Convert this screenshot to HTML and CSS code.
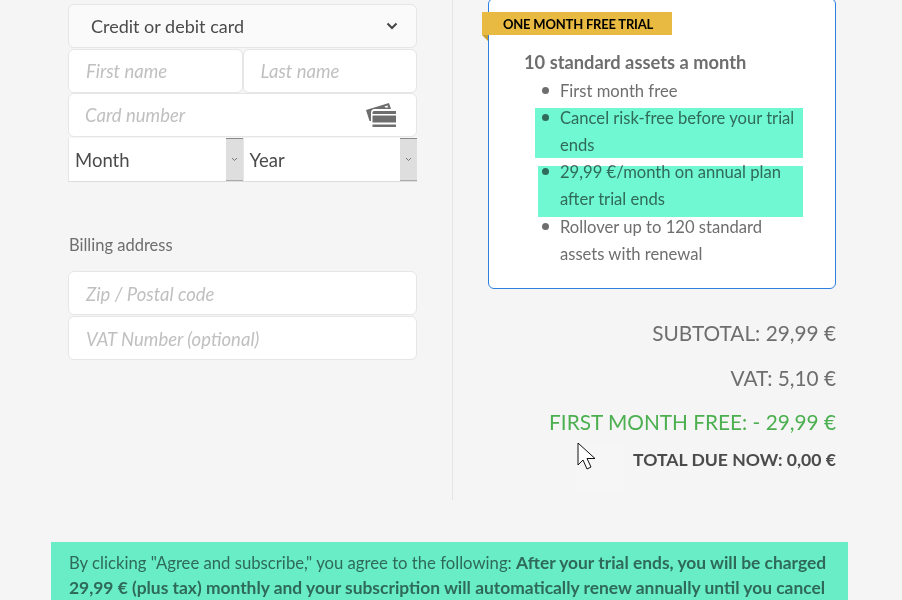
FILE: index.html
```html
<!DOCTYPE html>
<html lang="en">
<head>
    <meta charset="UTF-8">
    <title>Checkout</title>
    <link rel="stylesheet" href="styles.css">
</head>
<body>
    <div class="checkout">
        <div class="form-col">
            <div class="field pay-type">
                <span>Credit or debit card</span>
                <svg class="chevron" width="12" height="8" viewBox="0 0 12 8"><path d="M1.500 1.500 6 6l4.500-4.500" fill="none" stroke="#444" stroke-width="2"/></svg>
            </div>
            <div class="row">
                <div class="field half ph first-name">First name</div>
                <div class="field half ph last-name">Last name</div>
            </div>
            <div class="field ph card-no">
                <span>Card number</span>
                <svg class="card-icon" width="32" height="26" viewBox="0 0 32 26">
                    <path d="M1 8 24 1l2 6H9.500C7.500 7 6 8.500 6 10.500V19H4.500z" fill="#6e6e6e"/>
                    <path d="M19.500 4.500l3-.9.6 1.800h-3z" fill="#fff"/>
                    <path d="M7.500 10.500C7.500 9.500 8.500 9 9.500 9H31v3H7.500zM7.500 13.500H31V20.500H7.500zM7.500 22.500H31V25H7.500z" fill="#6e6e6e"/>
                </svg>
            </div>
            <div class="row">
                <div class="select month"><span class="sel-label">Month</span><span class="arrow"><svg width="7" height="5" viewBox="0 0 7 5"><path d="M1 1l2.500 2.500L6 1" fill="none" stroke="#777" stroke-width="1"/></svg></span></div>
                <div class="select year"><span class="sel-label">Year</span><span class="arrow"><svg width="7" height="5" viewBox="0 0 7 5"><path d="M1 1l2.500 2.500L6 1" fill="none" stroke="#777" stroke-width="1"/></svg></span></div>
            </div>
            <h4 class="billing">Billing address</h4>
            <div class="field ph zip">Zip / Postal code</div>
            <div class="field ph vat">VAT Number (optional)</div>
        </div>

        <div class="summary-col">
            <div class="plan">
                <div class="ribbon">ONE MONTH FREE TRIAL</div>
                <h3>10 standard assets a month</h3>
                <ul>
                    <li>First month free</li>
                    <li>Cancel risk-free before your trial ends</li>
                    <li>29,99 €/month on annual plan after trial ends</li>
                    <li>Rollover up to 120 standard assets with renewal</li>
                </ul>
                <div class="mark mark-one"></div>
                <div class="mark mark-two"></div>
            </div>
            <div class="totals">
                <p>SUBTOTAL: 29,99 €</p>
                <p>VAT: 5,10 €</p>
                <p class="free">FIRST MONTH FREE: - 29,99 €</p>
                <p class="due">TOTAL DUE NOW: 0,00 €</p>
            </div>
        </div>
    </div>

    <div class="terms">
        By clicking "Agree and subscribe," you agree to the following: <strong>After your trial ends, you will be charged 29,99 € (plus tax) monthly and your subscription will automatically renew annually until you cancel</strong>
    </div>

    <div class="cursor-box"></div>
    <svg class="cursor" width="20" height="29" viewBox="0 0 20 29"><path d="M1 1v22l5-5 4 9 4-2-4-8.500h8z" fill="#fff" stroke="#111" stroke-width="1"/></svg>
</body>
</html>
```

FILE: styles.css
```css
html, body { margin: 0; padding: 0; height: 600px; overflow: hidden; }
body { font-family: "Lato", "Noto Sans", sans-serif; background-color: #f5f5f5; color: #4b4b4b; position: relative; }

.checkout { display: flex; height: 500px; padding-left: 68px; }
.form-col { width: 349px; padding-top: 4px; padding-right: 35px; border-right: 1px solid #e4e4e4; }
.summary-col { width: 348px; margin-left: 35px; margin-top: -2px; }

.row { display: flex; }
.field { box-sizing: border-box; height: 44px; margin-bottom: 0.500px; background-color: #fff; border: 1px solid #e6e6e6; border-radius: 6px; font-size: 18.500px; display: flex; align-items: center; justify-content: space-between; }
.half { width: 50%; }
.ph { color: #c0c0c0; font-style: italic; }
.pay-type { background-color: #fafafa; padding: 0 18px 0 22px; color: #4b4b4b; font-size: 18px; }
.first-name, .last-name { padding-left: 17px; }
.card-no { padding: 0 19px 0 16px; }
.zip, .vat { padding: 2px 0 0 17px; margin-bottom: 1px; }

.select { box-sizing: border-box; width: 50%; height: 44px; display: flex; align-items: center; justify-content: space-between; padding-left: 6px; background-color: #fff; border-bottom: 1px solid #ddd; border-left: 1px solid #e6e6e6; font-size: 18.500px; }
.sel-label { padding-top: 2px; }
.arrow { width: 17px; height: 100%; box-sizing: border-box; background-color: #dedede; border-top: 1px solid #8a8a8a; border-bottom: 1px solid #aaa; display: flex; align-items: center; justify-content: center; }

.billing { font-size: 16.500px; font-weight: 400; color: #6e6e6e; margin: 53px 0 16px 1px; line-height: 20px; }

.plan { position: relative; box-sizing: border-box; height: 291px; background-color: #fff; border: 1px solid #2d80e0; border-radius: 6px; padding: 51px 32px 0 35px; }
.plan h3 { font-size: 18.300px; font-weight: 700; color: #6e6e6e; margin: 0; line-height: 24px; }
.plan ul { margin: 3.500px 0 0; padding: 0 0 0 36px; color: #6e6e6e; font-size: 16.600px; line-height: 27.200px; list-style: none; }
.plan li { position: relative; }
.plan li::before { content: ""; position: absolute; left: -18px; top: 9px; width: 7px; height: 7px; border-radius: 50%; background-color: #6e6e6e; }
.ribbon { position: absolute; left: -7px; top: 13px; width: 169px; height: 23px; padding-left: 21px; background-color: #e9ba41; color: #000; font-size: 13px; font-weight: 700; letter-spacing: -0.200px; line-height: 24px; }
.ribbon::after { content: ""; position: absolute; left: 0; top: 23px; border-top: 6px solid #c99f35; border-left: 6px solid transparent; }
.mark { position: absolute; background-color: #6ff8d1; mix-blend-mode: multiply; }
.mark-one { left: 46px; top: 109px; width: 268px; height: 50px; }
.mark-two { left: 49px; top: 167px; width: 265px; height: 51px; }

.totals { text-align: right; margin-top: 30px; }
.totals p { margin: 0; font-size: 20.800px; line-height: 28px; color: #6e6e6e; margin-bottom: 16.500px; }
.totals .free { color: #4caf50; margin-bottom: 12px; }
.totals .due { font-size: 17.600px; font-weight: 700; color: #4b4b4b; line-height: 24px; }

.terms { box-sizing: border-box; width: 797px; margin: 42px 0 0 51px; padding: 9px 18px; height: 80px; background-color: #68edc6; color: #2f6a59; font-size: 16.700px; line-height: 25px; }
.terms strong { font-weight: 700; font-size: 17.400px; line-height: 24px; }

.cursor-box { position: absolute; left: 577px; top: 442px; width: 48px; height: 48px; background-color: #f6f6f6; }
.cursor { position: absolute; left: 577px; top: 442px; }
```
